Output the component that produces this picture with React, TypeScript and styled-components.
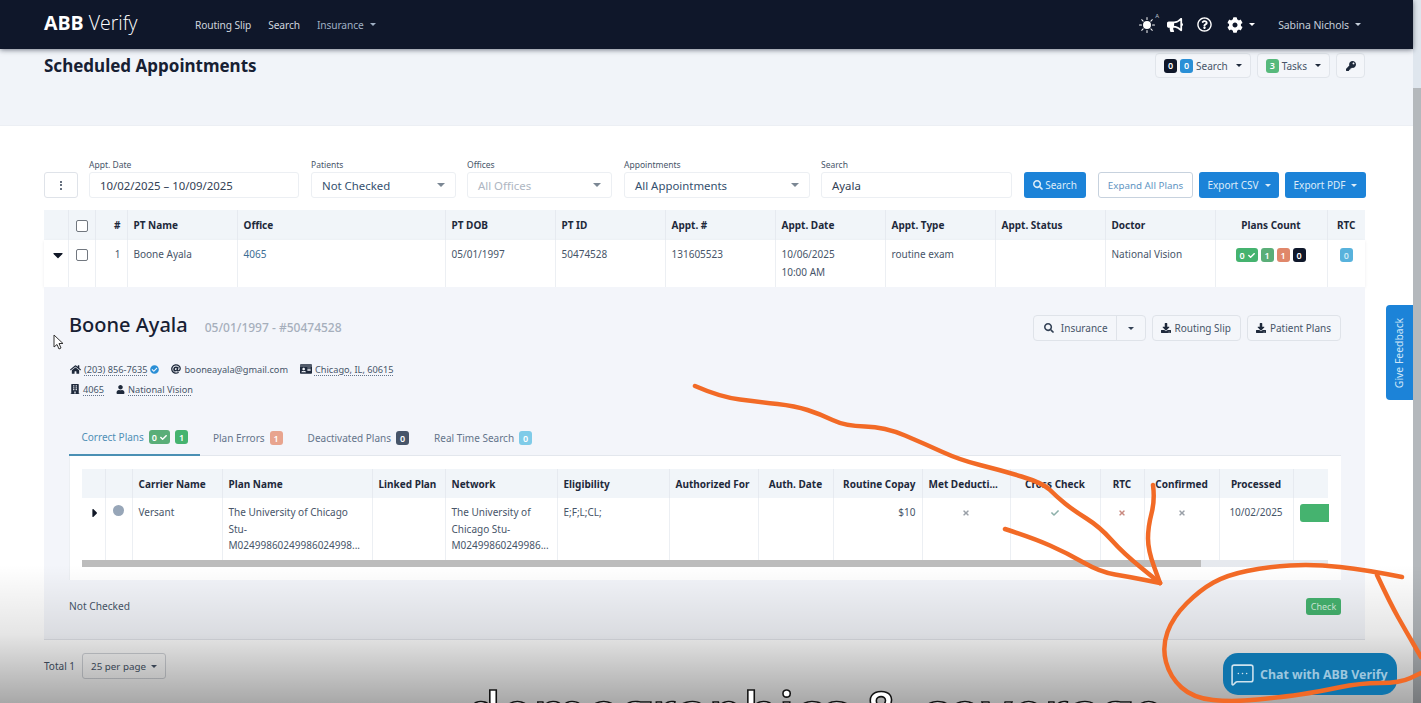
import React from "react";
import styled, { createGlobalStyle } from "styled-components";
import { FaSearch, FaHome, FaAt, FaIdCard, FaBuilding, FaUser, FaBullhorn, FaCog, FaRegQuestionCircle, FaKey, FaDownload, FaCheck, FaCheckCircle, FaTimes, FaCaretDown, FaCaretRight } from "react-icons/fa";
import { BsSunFill } from "react-icons/bs";
import { MessageSquareMore } from "lucide-react";

const Global = createGlobalStyle`
  html, body { margin: 0; padding: 0; background: #fff; }
  body { font-family: "Noto Sans", "Open Sans", sans-serif; color: #1e293b; }
  * { box-sizing: border-box; }
`;

const Shell = styled.div`
  position: relative; width: 1421px; height: 703px; overflow: hidden; display: flex; background: #fff;
`;
const Main = styled.div`flex: 0 0 1413px; width: 1413px; display: flex; flex-direction: column;`;
const Scrollbar = styled.div`flex: 0 0 8px; display: flex; flex-direction: column; background: #dfe6ee;`;
const Thumb = styled.div`margin-top: 88px; flex: 1; background: #b4b8bc;`;

const Nav = styled.header`
  height: 49px; flex: none; background: #0f172a; display: flex; align-items: center; padding: 0 48px 0 44px;
  box-shadow: 0 1px 5px rgba(15, 23, 42, .55); position: relative; z-index: 2;
`;
const Logo = styled.div`font-size: 19.5px; color: #fff; width: 151px; flex: none; font-weight: 300; display: flex; gap: 5px; font-family: "Open Sans", sans-serif; position: relative; top: -2px;
  b { font-weight: 700; }`;
const NavLink = styled.span<{ $muted?: boolean }>`
  font-size: 10.2px; color: ${p => (p.$muted ? "#9fb0c3" : "#cfd6df")}; margin-right: 17px; display: flex; align-items: center; gap: 6px; letter-spacing: -.1px;
`;
const Caret = styled.i<{ $c?: string; $s?: number; $ml?: number }>`
  display: inline-block; width: 0; height: 0; border-left: ${p => p.$s ?? 3}px solid transparent; border-right: ${p => p.$s ?? 3}px solid transparent;
  border-top: ${p => p.$s ?? 3}px solid ${p => p.$c ?? "currentColor"}; margin-left: ${p => p.$ml ?? 0}px;
`;
const NavRight = styled.div`margin-left: auto; display: flex; align-items: center; color: #fff;`;
const SunWrap = styled.span`position: relative; display: flex; width: 17px; height: 17px; margin-right: 11px; top: 1px;
  sup { position: absolute; right: -3px; top: -5px; font-size: 6px; color: #b9c2cf; line-height: 8px; }`;
const NavIcon = styled.span<{ $gap: number }>`display: flex; margin-right: ${p => p.$gap}px;`;
const UserName = styled(NavLink)`margin: 0 4px 0 23px; gap: 6px; color: #c5ced9; font-size: 10.5px;`;

const Head = styled.div`
  height: 77px; flex: none; background: #f1f4f9; border-bottom: 1px solid #eceff4; padding: 5px 48px 0 44px; display: flex; justify-content: space-between; align-items: flex-start;
`;
const Title = styled.h1`margin: 0; font-size: 17px; line-height: 23px; font-weight: 700; color: #172033;`;
const HeadTools = styled.div`display: flex; gap: 6px; margin-right: 0; margin-top: -1px;`;
const Tool = styled.div`
  height: 25px; min-width: 29px; padding: 0 8px; border: 1px solid #e1e5eb; border-radius: 4px; background: #f4f6fa; display: flex; align-items: center; justify-content: center; gap: 3px; font-size: 10px; color: #475569;
`;
const Badge = styled.span<{ $bg: string; $fg?: string }>`
  display: inline-flex; align-items: center; justify-content: center; gap: 3px; min-width: 13px; height: 14px; padding: 0 3px; border-radius: 3px; background: ${p => p.$bg}; color: ${p => p.$fg ?? "#fff"}; font-size: 9px; font-weight: 600; line-height: 1;
`;

const Body = styled.div`flex: 1; padding: 31px 48px 0 44px; min-height: 0;`;
const Filters = styled.div`display: flex; align-items: flex-end; height: 41px; margin-bottom: 12px;`;
const MenuBtn = styled.button`
  flex: none; width: 34px; height: 26px; margin-right: 11px; background: #fff; border: 1px solid #dfe3e9; border-radius: 3px; padding: 0; display: flex; align-items: center; justify-content: center; flex-direction: column; gap: 1.5px;
  i { width: 2px; height: 2px; border-radius: 50%; background: #334155; }
`;
const Field = styled.div<{ $w: number; $mr: number }>`width: ${p => p.$w}px; margin-right: ${p => p.$mr}px; flex: none;`;
const FieldLabel = styled.div`font-size: 8.5px; line-height: 16px; height: 15px; color: #475569;`;
const Input = styled.div<{ $off?: boolean; $blue?: boolean }>`
  height: 26px; border: 1px solid #eceff3; border-radius: 3px; display: flex; align-items: center; justify-content: space-between; padding: 0 10px;
  font-size: 11.4px; color: ${p => (p.$off ? "#aeb6c2" : p.$blue ? "#34506e" : "#334155")}; background: #fff;
`;
const Primary = styled.button<{ $mr: number; $w: number }>`
  height: 26px; width: ${p => p.$w}px; padding: 0; background: #1c83d8; border: 0; border-radius: 3px; color: #dcecf8; font: 10px "Noto Sans", sans-serif; display: flex; align-items: center; justify-content: center; gap: 6px; margin-right: ${p => p.$mr}px; white-space: nowrap; flex: none;
`;
const SearchBtn = styled(Primary)`gap: 2px;`;
const Outline = styled.button<{ $mr: number }>`
  height: 26px; width: 95px; padding: 0; background: #fff; border: 1px solid #c7d2de; border-radius: 3px; color: #5f95c2; font: 9.8px "Noto Sans", sans-serif; margin-right: ${p => p.$mr}px; white-space: nowrap; flex: none;
`;

const Table = styled.table`width: 100%; border-collapse: collapse; table-layout: fixed;`;
const Col = styled.col<{ $w: number }>`width: ${p => p.$w}px;`;
const Th = styled.th<{ $a?: string }>`
  height: 30px; background: #f1f5f9; border-right: 1px solid #e6eaf0; font-size: 10px; font-weight: 700; color: #1e293b; text-align: ${p => p.$a ?? "left"}; padding: 0 6px; white-space: nowrap; overflow: hidden; &:last-child { border-right: 0; }
`;
const SubTh = styled(Th)`height: 29px;`;
const Td = styled.td<{ $a?: string; $c?: string }>`
  background: #fff; border-right: 1px solid #eceff3; font-size: 10px; line-height: 17.5px; color: ${p => p.$c ?? "#475569"}; text-align: ${p => p.$a ?? "left"}; padding: 6px 6px 0; vertical-align: top; &:last-child { border-right: 0; }
  svg { vertical-align: middle; }
`;
const MainRow = styled.tr`height: 47px; box-shadow: 0 1px 3px rgba(15, 23, 42, .08);`;
const Check = styled.span`display: inline-block; width: 12px; height: 12px; border: 1.5px solid #71777f; border-radius: 2px; background: #fff; vertical-align: middle;`;
const Chips = styled.div`display: flex; justify-content: center; gap: 3px; padding-top: 2px;`;

const Panel = styled.section`background: #f3f5fa; height: 353px; padding: 25px 24px 0 25px; border-bottom: 1px solid #e2e5ea; display: flex; flex-direction: column;`;
const PanelTop = styled.div`display: flex; justify-content: space-between; align-items: flex-start; height: 29px;`;
const NameWrap = styled.div`display: flex; align-items: baseline; gap: 17px;`;
const Name = styled.h2`margin: 0; font-size: 20px; line-height: 26px; font-weight: 500; color: #172033;`;
const Sub = styled.span`font-size: 12px; color: #a6afbc; font-weight: 500;`;
const PanelBtns = styled.div`display: flex; gap: 6px; margin-top: 3px;`;
const PBtn = styled.div`height: 26px; padding: 0 9px 0 8px; background: #f4f6fa; border: 1px solid #dfe3e9; border-radius: 4px; display: flex; align-items: center; gap: 4px; font-size: 10px; color: #475569;`;
const SplitBtn = styled.div`display: flex; height: 26px; background: #f4f6fa; border: 1px solid #dfe3e9; border-radius: 4px; font-size: 10px; color: #475569;`;
const SplitMain = styled.div`display: flex; align-items: center; gap: 7px; padding: 0 8px 0 10px; border-right: 1px solid #dfe3e9;`;
const SplitCaret = styled.div`width: 28px; display: flex; align-items: center; justify-content: center; color: #334155;`;
const Contact = styled.div<{ $mt: number }>`display: flex; align-items: center; gap: 12px; margin-top: ${p => p.$mt}px; height: 12px; font-size: 9.2px; color: #475569; padding-left: 1px;`;
const CItem = styled.span`display: flex; align-items: center; gap: 3px; svg { color: #1e293b; flex: none; }`;
const Dotted = styled.span`text-decoration: underline dotted #64748b; text-underline-offset: 1.5px;`;
const Tabs = styled.nav`display: flex; height: 36px; margin-top: 25px; border-bottom: 1px solid #e3e7ed;`;
const Tab = styled.div<{ $on?: boolean }>`
  display: flex; align-items: center; gap: 5px; height: 36px; padding: 0 12.5px; font-size: 10px; color: ${p => (p.$on ? "#4f8fb6" : "#64748b")}; border-bottom: ${p => (p.$on ? "2px solid #4a90b4" : "0")};
`;
const Card = styled.div`background: #fff; height: 124px; padding: 13px 12px 0; border-left: 1px solid #eceff3;`;
const SubTable = styled(Table)`width: 1246px;`;
const SubTd = styled(Td)`line-height: 16.5px; padding-top: 6px; height: 62px;`;
const Scrollx = styled.div`height: 7px; width: 1246px; background: #e6e9ee;`;
const ScrollxThumb = styled.div`width: 1119px; height: 7px; background: #bcbcbc;`;
const Dot = styled.span`display: inline-block; width: 11px; height: 11px; border-radius: 50%; background: #97a6b8;`;
const GreenStub = styled.div`height: 18px; margin-right: -7px; background: #45b36f; border-radius: 3px 0 0 3px;`;
const CardFoot = styled.div`display: flex; justify-content: space-between; align-items: center; height: 52px; font-size: 10.2px; color: #475569;`;
const CheckBtn = styled.button`width: 35px; height: 17px; background: #45b36f; color: #d6f0df; border: 0; padding: 0; border-radius: 3px; font: 9px "Noto Sans", sans-serif;`;
const Pager = styled.div`display: flex; align-items: center; gap: 7px; height: 26px; margin-top: 13px; font-size: 10px; color: #475569;`;
const PerPage = styled.div`height: 26px; padding: 0 8px; border: 1px solid #d2d5da; border-radius: 3px; display: flex; align-items: center; gap: 5px; font-size: 9.8px;`;

/* things that lie over the page */
const Feedback = styled.div`
  position: absolute; left: 1386px; top: 305px; width: 27px; height: 95px; background: #1c83d8; border-radius: 4px 0 0 4px; color: #cfe6f7; font-size: 10.4px; display: flex; align-items: center; justify-content: center; z-index: 3;
  span { transform: rotate(-90deg); white-space: nowrap; }
`;
const Fade = styled.div`
  position: absolute; left: 0; right: 0; top: 565px; bottom: 0; pointer-events: none; z-index: 4;
  background: linear-gradient(to bottom, rgba(0,0,0,0) 0%, rgba(0,0,0,.1) 50%, rgba(0,0,0,.34) 100%);
`;
const Chat = styled.div`
  position: absolute; left: 1223px; top: 653px; width: 174px; height: 42px; border-radius: 15px; background: #0f75ad; color: #9cc7df; display: flex; align-items: center; gap: 5px; padding-left: 7px; font-size: 12.4px; font-weight: 700; white-space: nowrap; z-index: 5;
`;
const Caption = styled.div`
  position: absolute; left: 466px; top: 685px; font: 600 56px/50px "Open Sans", sans-serif; color: #fff; -webkit-text-stroke: 1.6px #111; white-space: nowrap; z-index: 5;
`;
const Ink = styled.svg`position: absolute; left: 0; top: 0; width: 1421px; height: 703px; pointer-events: none; z-index: 6;`;
const Cursor = styled.svg`position: absolute; left: 53px; top: 334px; z-index: 6;`;

const line = (pts: number[][]) => {
  let d = `M${pts[0][0]} ${pts[0][1]}`;
  for (let i = 1; i < pts.length - 1; i++) {
    const mx = (pts[i][0] + pts[i + 1][0]) / 2, my = (pts[i][1] + pts[i + 1][1]) / 2;
    d += ` Q${pts[i][0]} ${pts[i][1]} ${mx} ${my}`;
  }
  const l = pts[pts.length - 1];
  return d + ` L${l[0]} ${l[1]}`;
};
const strokes = [
  [[695,386],[720,397],[760,402],[795,406],[820,414],[845,426],[885,427],[925,444],[960,460],[1000,470],[1043,483],[1057,497],[1073,510],[1100,527],[1123,553],[1160,583]],
  [[1153,485],[1155,500],[1148,527],[1148,550],[1160,583]],
  [[1005,529],[1033,538],[1067,553],[1100,572],[1130,577],[1160,583]],
  [[1402,577],[1367,570],[1313,564],[1267,567],[1227,575],[1200,590],[1173,617],[1162,647],[1170,677],[1193,698],[1233,702],[1283,697],[1317,692],[1360,683],[1400,683],[1421,673]],
  [[1377,575],[1390,603],[1407,633],[1421,657]],
];

const mainCols = [24, 27, 32, 110, 208, 110, 110, 110, 110, 110, 110, 110, 112, 38];
const subCols = [23, 27, 90, 150, 73, 112, 112, 89, 75, 89, 88, 90, 44, 75, 74, 35];

export default function App() {
  return (
    <Shell>
      <Global />
      <Main>
        <Nav>
          <Logo><b>ABB</b> Verify</Logo>
          <NavLink>Routing Slip</NavLink>
          <NavLink>Search</NavLink>
          <NavLink $muted>Insurance <Caret /></NavLink>
          <NavRight>
            <SunWrap><BsSunFill size={16} /><sup>A</sup></SunWrap>
            <NavIcon $gap={14}><FaBullhorn size={16} /></NavIcon>
            <NavIcon $gap={15}><FaRegQuestionCircle size={15} /></NavIcon>
            <NavIcon $gap={6}><FaCog size={16} /></NavIcon>
            <Caret />
            <UserName>Sabina Nichols <Caret /></UserName>
          </NavRight>
        </Nav>
        <Head>
          <Title>Scheduled Appointments</Title>
          <HeadTools>
            <Tool><Badge $bg="#0f172a">0</Badge><Badge $bg="#2a8fd6">0</Badge>Search<Caret $c="#1e293b" $ml={5} /></Tool>
            <Tool><Badge $bg="#57b97c">3</Badge>Tasks<Caret $c="#1e293b" $ml={5} /></Tool>
            <Tool><FaKey size={10} color="#1e293b" /></Tool>
          </HeadTools>
        </Head>
        <Body>
          <Filters>
            <MenuBtn><i /><i /><i /></MenuBtn>
            <Field $w={210} $mr={12}><FieldLabel>Appt. Date</FieldLabel><Input>10/02/2025 – 10/09/2025</Input></Field>
            <Field $w={145} $mr={11}><FieldLabel>Patients</FieldLabel><Input $blue>Not Checked <Caret $c="#7b8794" $s={4} /></Input></Field>
            <Field $w={145} $mr={12}><FieldLabel>Offices</FieldLabel><Input $off>All Offices <Caret $c="#7b8794" $s={4} /></Input></Field>
            <Field $w={186} $mr={11}><FieldLabel>Appointments</FieldLabel><Input $blue>All Appointments <Caret $c="#7b8794" $s={4} /></Input></Field>
            <Field $w={191} $mr={12}><FieldLabel>Search</FieldLabel><Input>Ayala</Input></Field>
            <SearchBtn $mr={12} $w={62}><FaSearch size={10} />Search</SearchBtn>
            <Outline $mr={6}>Expand All Plans</Outline>
            <Primary $mr={6} $w={80}>Export CSV <Caret /></Primary>
            <Primary $mr={0} $w={81}>Export PDF <Caret /></Primary>
          </Filters>
          <Table>
            <colgroup>{mainCols.map((w, i) => <Col key={i} $w={w} />)}</colgroup>
            <thead>
              <tr>
                <Th /><Th $a="center"><Check /></Th><Th $a="right">#</Th><Th>PT Name</Th><Th>Office</Th><Th>PT DOB</Th><Th>PT ID</Th><Th>Appt. #</Th><Th>Appt. Date</Th><Th>Appt. Type</Th><Th>Appt. Status</Th><Th>Doctor</Th><Th $a="center">Plans Count</Th><Th $a="center">RTC</Th>
              </tr>
            </thead>
            <tbody>
              <MainRow>
                <Td $a="center" $c="#111827"><FaCaretDown size={16} /></Td>
                <Td $a="center"><Check /></Td>
                <Td $a="right">1</Td>
                <Td>Boone Ayala</Td>
                <Td $c="#3d6d94">4065</Td>
                <Td>05/01/1997</Td>
                <Td>50474528</Td>
                <Td>131605523</Td>
                <Td>10/06/2025<br />10:00 AM</Td>
                <Td>routine exam</Td>
                <Td />
                <Td>National Vision</Td>
                <Td>
                  <Chips>
                    <Badge $bg="#45b36f">0 <FaCheck size={7} /></Badge>
                    <Badge $bg="#5aae78">1</Badge>
                    <Badge $bg="#e0876a">1</Badge>
                    <Badge $bg="#0f172a">0</Badge>
                  </Chips>
                </Td>
                <Td><Chips><Badge $bg="#58b2dc" $fg="#cdeaf6">0</Badge></Chips></Td>
              </MainRow>
            </tbody>
          </Table>
          <Panel>
            <PanelTop>
              <NameWrap><Name>Boone Ayala</Name><Sub>05/01/1997 - #50474528</Sub></NameWrap>
              <PanelBtns>
                <SplitBtn>
                  <SplitMain><FaSearch size={10} color="#334155" />Insurance</SplitMain>
                  <SplitCaret><Caret /></SplitCaret>
                </SplitBtn>
                <PBtn><FaDownload size={10} color="#1e293b" />Routing Slip</PBtn>
                <PBtn><FaDownload size={10} color="#1e293b" />Patient Plans</PBtn>
              </PanelBtns>
            </PanelTop>
            <Contact $mt={22}>
              <CItem><FaHome size={11} /><Dotted>(203) 856-7635</Dotted><FaCheckCircle size={9} color="#2a8fd6" /></CItem>
              <CItem><FaAt size={10} />booneayala@gmail.com</CItem>
              <CItem><FaIdCard size={12} /><Dotted>Chicago, IL, 60615</Dotted></CItem>
            </Contact>
            <Contact $mt={8}>
              <CItem><FaBuilding size={10} /><Dotted>4065</Dotted></CItem>
              <CItem><FaUser size={9} /><Dotted>National Vision</Dotted></CItem>
            </Contact>
            <Tabs>
              <Tab $on>Correct Plans <Badge $bg="#5aae78">0 <FaCheck size={7} /></Badge><Badge $bg="#45b36f">1</Badge></Tab>
              <Tab>Plan Errors <Badge $bg="#e8a48e">1</Badge></Tab>
              <Tab>Deactivated Plans <Badge $bg="#475569">0</Badge></Tab>
              <Tab>Real Time Search <Badge $bg="#7fcbe8">0</Badge></Tab>
            </Tabs>
            <Card>
              <SubTable>
                <colgroup>{subCols.map((w, i) => <Col key={i} $w={w} />)}</colgroup>
                <thead>
                  <tr>
                    <SubTh /><SubTh /><SubTh>Carrier Name</SubTh><SubTh>Plan Name</SubTh><SubTh>Linked Plan</SubTh><SubTh>Network</SubTh><SubTh>Eligibility</SubTh><SubTh>Authorized For</SubTh><SubTh $a="center">Auth. Date</SubTh><SubTh $a="right">Routine Copay</SubTh><SubTh>Met Deducti...</SubTh><SubTh $a="center">Cross Check</SubTh><SubTh $a="center">RTC</SubTh><SubTh $a="center">Confirmed</SubTh><SubTh $a="center">Processed</SubTh><SubTh />
                  </tr>
                </thead>
                <tbody>
                  <tr>
                    <SubTd $a="center" $c="#111827"><FaCaretRight size={14} /></SubTd>
                    <SubTd $a="center"><Dot /></SubTd>
                    <SubTd>Versant</SubTd>
                    <SubTd>The University of Chicago Stu-<br />M02499860249986024998...</SubTd>
                    <SubTd />
                    <SubTd>The University of Chicago Stu-<br />M02499860249986...</SubTd>
                    <SubTd>E;F;L;CL;</SubTd>
                    <SubTd />
                    <SubTd />
                    <SubTd $a="right">$10</SubTd>
                    <SubTd $a="center" $c="#9aa0a8"><FaTimes size={8} /></SubTd>
                    <SubTd $a="center" $c="#8db0aa"><FaCheck size={8} /></SubTd>
                    <SubTd $a="center" $c="#c98a80"><FaTimes size={8} /></SubTd>
                    <SubTd $a="center" $c="#9aa0a8"><FaTimes size={8} /></SubTd>
                    <SubTd $a="center">10/02/2025</SubTd>
                    <SubTd><GreenStub /></SubTd>
                  </tr>
                </tbody>
              </SubTable>
              <Scrollx><ScrollxThumb /></Scrollx>
            </Card>
            <CardFoot>Not Checked<CheckBtn>Check</CheckBtn></CardFoot>
          </Panel>
          <Pager>Total 1<PerPage>25 per page <Caret /></PerPage></Pager>
        </Body>
      </Main>
      <Scrollbar><Thumb /></Scrollbar>
      <Feedback><span>Give Feedback</span></Feedback>
      <Fade />
      <Chat><MessageSquareMore size={25} strokeWidth={1.5} color="#cfe3ee" />Chat with ABB Verify</Chat>
      <Caption>demographics &amp; coverage</Caption>
      <Cursor width="11" height="16" viewBox="0 0 11 16"><path d="M1 1 L1 13 L4 10.5 L6 15 L8 14 L6 9.5 L10 9.5 Z" fill="#fff" stroke="#333" strokeWidth="1" /></Cursor>
      <Ink viewBox="0 0 1421 703">
        {strokes.map((s, i) => <path key={i} d={line(s)} fill="none" stroke="#f26a26" strokeWidth="4.5" strokeLinecap="round" strokeLinejoin="round" />)}
      </Ink>
    </Shell>
  );
}
